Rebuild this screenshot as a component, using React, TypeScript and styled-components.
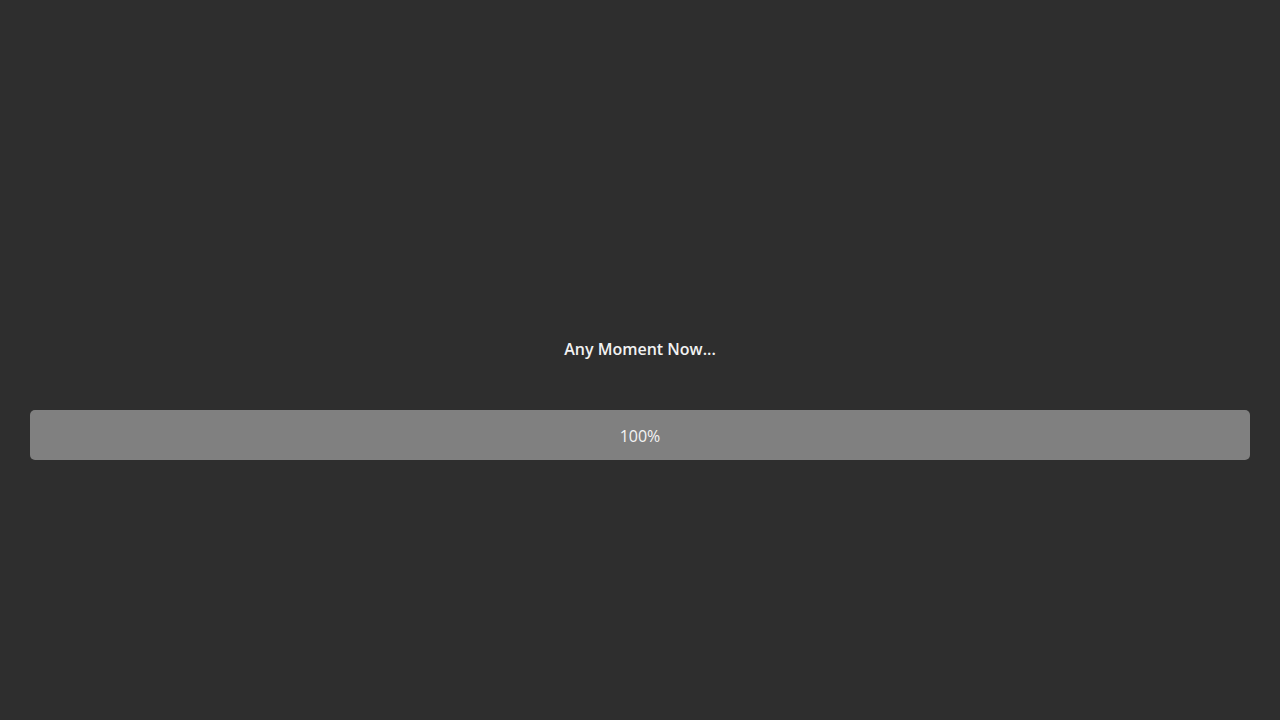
import React from "react";
import styled, { createGlobalStyle } from "styled-components";

const Global = createGlobalStyle`
  html, body { margin: 0; padding: 0; background: #2e2e2e; }
  body { font-family: "Open Sans", "Noto Sans", sans-serif; }
`;

const Screen = styled.div`
  width: 1280px;
  height: 720px;
  box-sizing: border-box;
  background: #2e2e2e;
  display: flex;
  flex-direction: column;
  align-items: center;
  padding: 338px 30px 0;
`;

const Title = styled.div`
  color: #f2f2f2;
  font-size: 16px;
  font-weight: 600;
  line-height: 22px;
  height: 22px;
`;

const Bar = styled.div`
  margin-top: 50px;
  align-self: stretch;
  height: 50px;
  box-sizing: border-box;
  padding-top: 2px;
  border-radius: 5px;
  background: #808080;
  display: flex;
  align-items: center;
  justify-content: center;
  color: #f4f4f4;
  font-size: 16px;
  font-weight: 400;
`;

export default function App() {
  return (
    <>
      <Global />
      <Screen>
        <Title>Any Moment Now...</Title>
        <Bar>100%</Bar>
      </Screen>
    </>
  );
}
